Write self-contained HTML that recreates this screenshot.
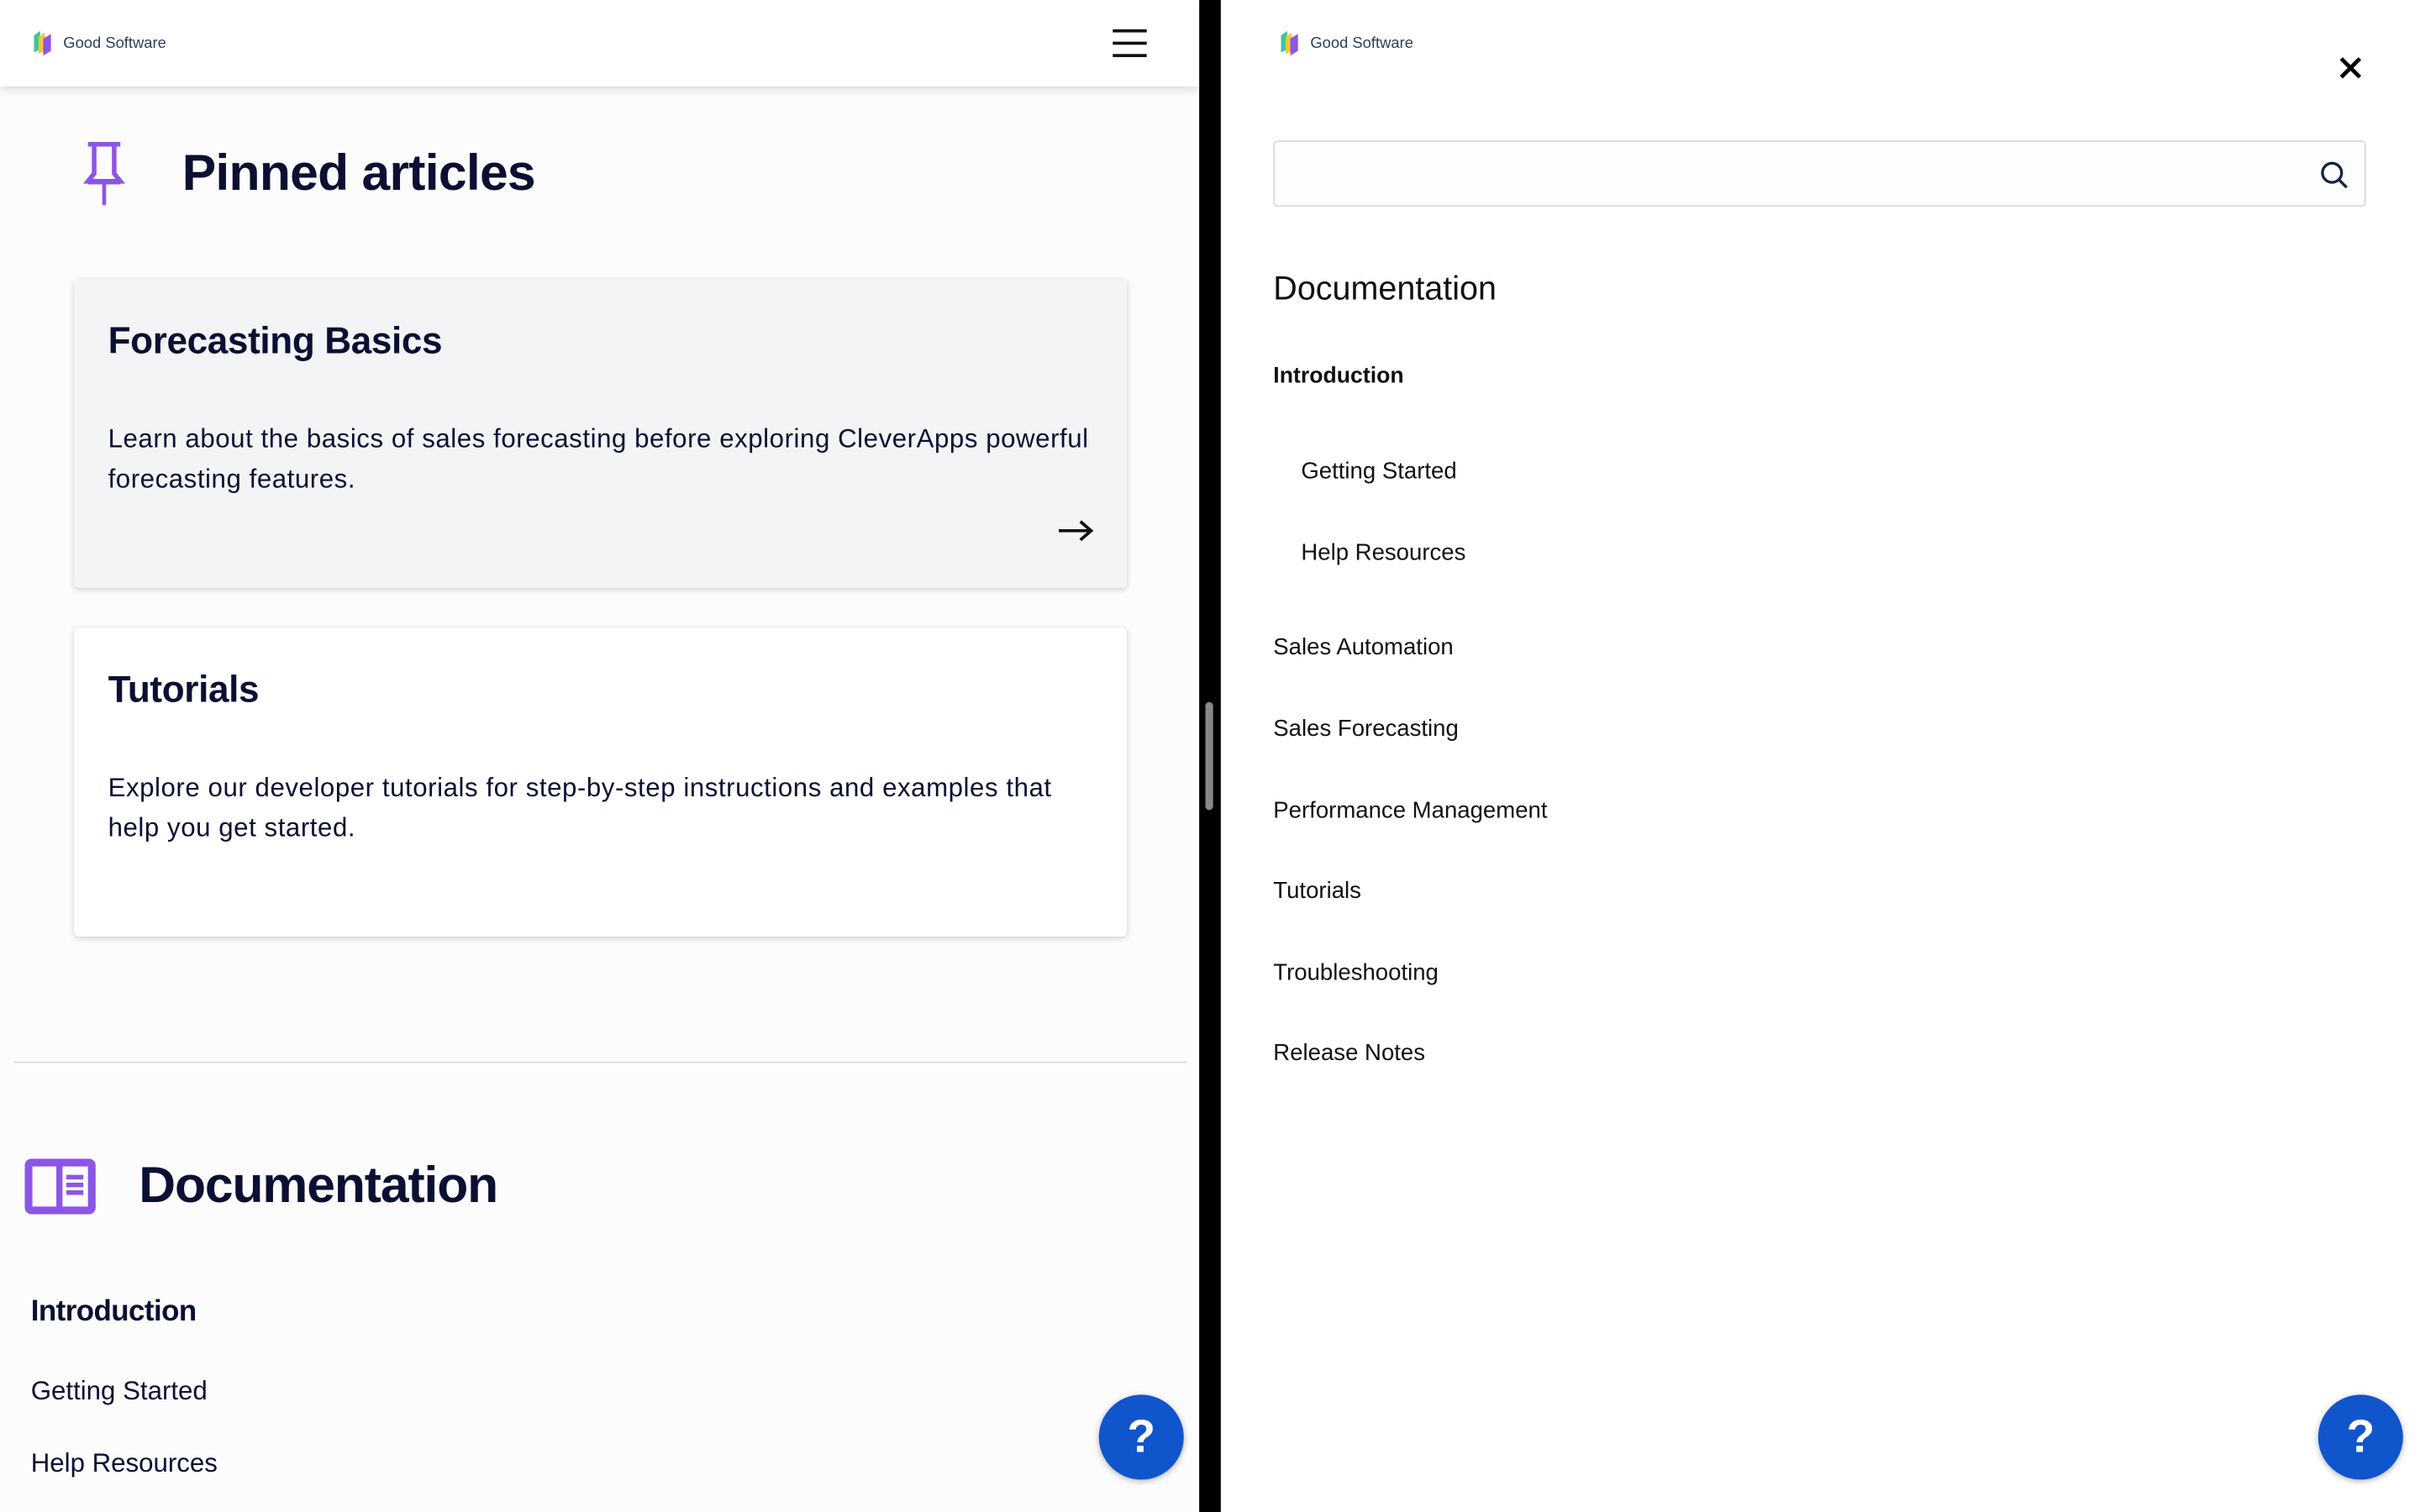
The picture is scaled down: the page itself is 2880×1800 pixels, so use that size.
<!DOCTYPE html>
<html><head><meta charset="utf-8"><style>
*{margin:0;padding:0;box-sizing:border-box}
html,body{width:2880px;height:1800px;overflow:hidden;background:#000}
#w{position:absolute;left:0;top:0;width:1568px;height:980px;transform:scale(1.836735);transform-origin:0 0;font-family:"Liberation Sans",sans-serif;color:#0b1033}
.a{position:absolute;white-space:nowrap}
#L{position:absolute;left:0;top:0;width:777px;height:980px;background:#fcfcfd;overflow:hidden}
#R{position:absolute;left:791px;top:0;width:777px;height:980px;background:#fff}
.hdr{position:absolute;left:0;top:0;width:777px;height:56px;background:#fff;box-shadow:0 2px 6px rgba(0,0,0,.15)}
.logo{position:absolute;display:flex;align-items:center;font-size:10px;color:#2b3e5c}
.card{position:absolute;left:48px;width:682px;height:200px;border-radius:3px;box-shadow:0 1px 4px rgba(0,0,0,.18)}
.card h3{position:absolute;left:22px;top:27px;font-size:24px;font-weight:bold;letter-spacing:-.2px}
.card p{position:absolute;left:22px;top:91px;width:640px;font-size:17px;line-height:26px;letter-spacing:.3px}
.help{position:absolute;width:55px;height:55px;border-radius:50%;background:#1155cc;color:#fff;font-size:30px;font-weight:bold;text-align:center;line-height:55px;box-shadow:0 1px 4px rgba(0,0,0,.3)}
.nav{position:absolute;left:34px;font-size:15px;color:#111;white-space:nowrap}
</style></head><body><div id="w">
<div id="L">
 <div class="hdr">
  <div class="logo" style="left:20px;top:19px"><svg width="18" height="18" viewBox="0 0 18 18"><path d="M2 4l4-3v12l-4 2z" fill="#3cc6a0"/><path d="M5 5l4-3v12l-4 2z" fill="#f5c636"/><path d="M8 6l5-3v11l-5 3z" fill="#8e55e9"/></svg><span style="margin-left:3px">Good Software</span></div>
  <div style="position:absolute;left:721px;top:19px;width:22px;height:2px;background:#111"></div>
  <div style="position:absolute;left:721px;top:27px;width:22px;height:2px;background:#111"></div>
  <div style="position:absolute;left:721px;top:35px;width:22px;height:2px;background:#111"></div>
 </div>
 <svg class="a" style="left:54px;top:92px" width="27" height="42" viewBox="0 0 27 42"><path d="M3 1.5h21M7 1.5v19l-4 5h21l-4-5v-19" fill="none" stroke="#8c55e8" stroke-width="3"/><path d="M3 25.5h21v2H3z" fill="#8c55e8"/><path d="M13.5 27v14" stroke="#8c55e8" stroke-width="2.5"/></svg>
 <div class="a" style="left:118px;top:93px;font-size:33px;font-weight:bold;letter-spacing:-.4px">Pinned articles</div>
 <div class="card" style="top:181px;background:#f3f4f6">
  <h3>Forecasting Basics</h3>
  <p>Learn about the basics of sales forecasting before exploring CleverApps powerful forecasting features.</p>
  <svg class="a" style="left:637px;top:156px" width="24" height="14" viewBox="0 0 24 14"><path d="M1 7h21M15 1l7 6-7 6" fill="none" stroke="#111" stroke-width="2"/></svg>
 </div>
 <div class="card" style="top:407px;background:#fff">
  <h3>Tutorials</h3>
  <p>Explore our developer tutorials for step-by-step instructions and examples that help you get started.</p>
 </div>
 <div style="position:absolute;left:9px;top:688px;width:760px;height:1px;background:#ddd"></div>
 <svg class="a" style="left:16px;top:751px" width="46" height="36" viewBox="0 0 46 36"><rect x="2.5" y="2.5" width="41" height="31" rx="2" fill="none" stroke="#8c55e8" stroke-width="5"/><path d="M22.5 3v30" stroke="#8c55e8" stroke-width="4"/><path d="M27 12h11M27 17h11M27 22h11" stroke="#8c55e8" stroke-width="3"/></svg>
 <div class="a" style="left:90px;top:749px;font-size:33px;font-weight:bold;letter-spacing:-.6px">Documentation</div>
 <div class="a" style="left:20px;top:840px;font-size:19px;font-weight:bold;letter-spacing:-.3px">Introduction</div>
 <div class="a" style="left:20px;top:892px;font-size:17px">Getting Started</div>
 <div class="a" style="left:20px;top:939px;font-size:17px">Help Resources</div>
 <div class="help" style="left:712px;top:904px">?</div>
</div>
<div style="position:absolute;left:781px;top:455px;width:5px;height:70px;border-radius:3px;background:#888"></div>
<div id="R">
 <div class="logo" style="left:37px;top:19px"><svg width="18" height="18" viewBox="0 0 18 18"><path d="M2 4l4-3v12l-4 2z" fill="#3cc6a0"/><path d="M5 5l4-3v12l-4 2z" fill="#f5c636"/><path d="M8 6l5-3v11l-5 3z" fill="#8e55e9"/></svg><span style="margin-left:3px">Good Software</span></div>
 <svg class="a" style="left:724px;top:36px" width="16" height="16" viewBox="0 0 16 16"><path d="M2 2l12 12M14 2L2 14" stroke="#000" stroke-width="2.6"/></svg>
 <div style="position:absolute;left:34px;top:91px;width:708px;height:43px;border:1px solid #d9dadf;border-radius:3px;background:#fdfdfd"></div>
 <svg class="a" style="left:712px;top:104px" width="19" height="19" viewBox="0 0 19 19"><circle cx="8" cy="8" r="6.2" fill="none" stroke="#15233f" stroke-width="1.8"/><path d="M12.5 12.5l5 5" stroke="#15233f" stroke-width="1.8"/></svg>
 <div class="a" style="left:34px;top:175px;font-size:21.5px;color:#111">Documentation</div>
 <div class="nav" style="top:236px;font-weight:bold;font-size:14.5px">Introduction</div>
 <div class="nav" style="left:52px;top:297px">Getting Started</div>
 <div class="nav" style="left:52px;top:350px">Help Resources</div>
 <div class="nav" style="top:411px">Sales Automation</div>
 <div class="nav" style="top:464px">Sales Forecasting</div>
 <div class="nav" style="top:517px">Performance Management</div>
 <div class="nav" style="top:569px">Tutorials</div>
 <div class="nav" style="top:622px">Troubleshooting</div>
 <div class="nav" style="top:674px">Release Notes</div>
 <div class="help" style="left:711px;top:904px">?</div>
</div>
</div></body></html>
